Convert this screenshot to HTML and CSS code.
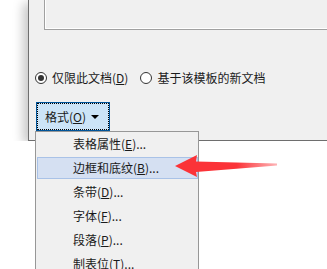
FILE: index.html
```html
<!DOCTYPE html>
<html lang="zh-CN">
<head>
    <meta charset="UTF-8">
    <title>格式菜单</title>
    <link rel="stylesheet" href="styles.css">
</head>
<body>

    <div class="dialog">
        <div class="preview"></div>

        <div class="radio-row">
            <label class="radio-item">
                <span class="radio checked"></span>
                <span>仅限此文档(<u>D</u>)</span>
            </label>
            <label class="radio-item">
                <span class="radio"></span>
                <span>基于该模板的新文档</span>
            </label>
        </div>

        <button class="format-btn">格式(<u>O</u>) <span class="caret"></span></button>
    </div>

    <ul class="menu">
        <li>表格属性(<u>E</u>)...</li>
        <li class="active">边框和底纹(<u>B</u>)...</li>
        <li>条带(<u>D</u>)...</li>
        <li>字体(<u>F</u>)...</li>
        <li>段落(<u>P</u>)...</li>
        <li>制表位(<u>T</u>)...</li>
    </ul>

    <svg class="annotation" width="327" height="269" viewBox="0 0 327 269">
        <defs>
            <linearGradient id="fade" x1="175" y1="0" x2="278" y2="0" gradientUnits="userSpaceOnUse">
                <stop offset="0.6" stop-color="#fb3338" stop-opacity="1"/>
                <stop offset="1" stop-color="#fb3338" stop-opacity="0.35"/>
            </linearGradient>
        </defs>
        <polygon fill="url(#fade)" points="175,166 197,155 196,161.5 277,163.5 277,165.5 196,172 197,177"/>
    </svg>

</body>
</html>
```

FILE: styles.css
```css
body {
    margin: 0;
    background-color: #fff;
    font-family: "Noto Sans CJK SC", "Microsoft YaHei", sans-serif;
    font-size: 12px;
    color: #1a1a1a;
    overflow: hidden;
}
.dialog {
    margin-left: 28px;
    height: 140px;
    background-color: #f0f0f0;
    border-left: 1px solid #6e6e6e;
    border-bottom: 1px solid #6e6e6e;
    box-shadow: -5px 3px 10px rgba(0,0,0,0.22);
}
.preview {
    margin-left: 15px;
    height: 29px;
    border-left: 1px solid #a0a0a0;
    border-bottom: 1px solid #a0a0a0;
    box-shadow: inset 1px -1px 0 #fff;
}
.radio-row {
    display: flex;
    gap: 12px;
    margin-top: 41px;
    margin-left: 6px;
    height: 14px;
    align-items: center;
}
.radio-item {
    display: flex;
    align-items: center;
    gap: 5px;
    line-height: 14px;
}
.radio {
    width: 10px;
    height: 10px;
    border: 1px solid #333;
    border-radius: 50%;
    background-color: #fff;
    position: relative;
}
.radio.checked::after {
    content: "";
    position: absolute;
    left: 2px;
    top: 2px;
    width: 6px;
    height: 6px;
    border-radius: 50%;
    background-color: #333;
}
u {
    text-decoration-thickness: 1px;
    text-underline-offset: 1px;
}
.format-btn {
    display: flex;
    align-items: center;
    margin-top: 17px;
    margin-left: 7px;
    width: 74px;
    height: 29px;
    padding: 0 0 0 8px;
    font: inherit;
    color: #1a1a1a;
    background-color: #cce4f7;
    border: 1px solid #005499;
    outline: 1px dotted #000;
    outline-offset: -2px;
}
.caret {
    display: inline-block;
    margin-left: 5px;
    width: 0;
    height: 0;
    border-left: 4px solid transparent;
    border-right: 4px solid transparent;
    border-top: 4px solid #000;
}
.menu {
    position: absolute;
    left: 35px;
    top: 131px;
    width: 162px;
    height: 150px;
    margin: 0;
    padding: 1px 0 0 0;
    list-style-type: none;
    background-color: #f0f0f0;
    border: 1px solid #979797;
}
.menu li {
    height: 20px;
    line-height: 20px;
    margin: 0 0 2px 1px;
    padding-left: 35px;
    border: 1px solid transparent;
    width: 124px;
}
.menu li.active {
    background-color: #d5e0f2;
    border-color: #a9c2e7;
}
.annotation {
    position: absolute;
    left: 0;
    top: 0;
    pointer-events: none;
}
```
